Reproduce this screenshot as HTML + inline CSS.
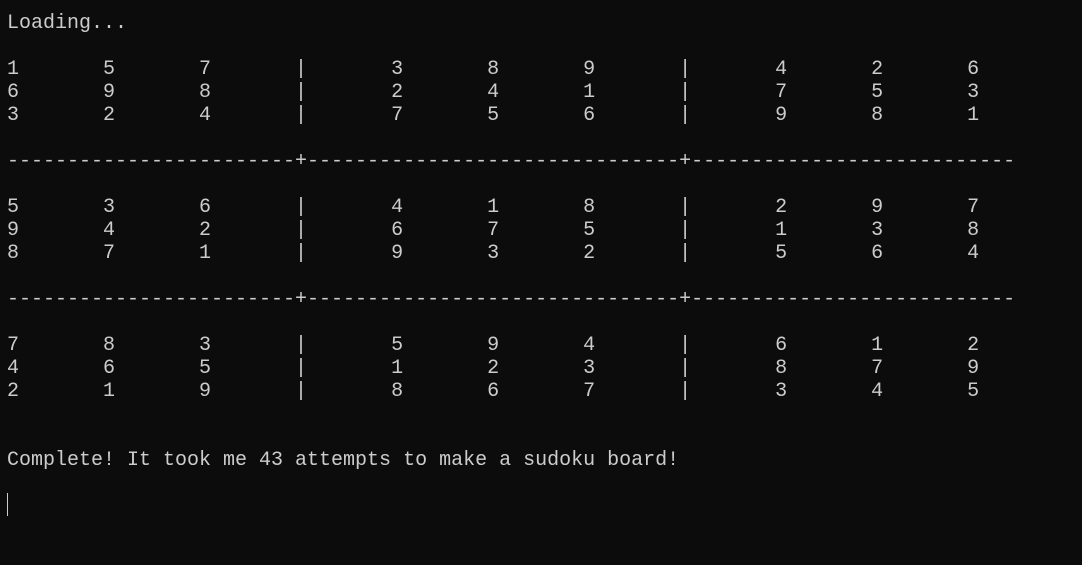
<!DOCTYPE html>
<html><head><meta charset="utf-8"><style>
html,body{margin:0;padding:0;background:#0c0c0c;width:1082px;height:565px;overflow:hidden}
pre{margin:0;position:absolute;left:7px;top:12px;font-family:"Liberation Mono",monospace;font-size:20px;line-height:23px;color:#cccccc;tab-size:8;-moz-tab-size:8;white-space:pre}
.cur{position:absolute;left:7px;top:493px;width:1px;height:23px;background:#cccccc}
</style></head><body>
<pre>Loading...

1	5	7	|	3	8	9	|	4	2	6
6	9	8	|	2	4	1	|	7	5	3
3	2	4	|	7	5	6	|	9	8	1

------------------------+-------------------------------+---------------------------

5	3	6	|	4	1	8	|	2	9	7
9	4	2	|	6	7	5	|	1	3	8
8	7	1	|	9	3	2	|	5	6	4

------------------------+-------------------------------+---------------------------

7	8	3	|	5	9	4	|	6	1	2
4	6	5	|	1	2	3	|	8	7	9
2	1	9	|	8	6	7	|	3	4	5


Complete! It took me 43 attempts to make a sudoku board!
</pre>
<div class="cur"></div>
</body></html>
